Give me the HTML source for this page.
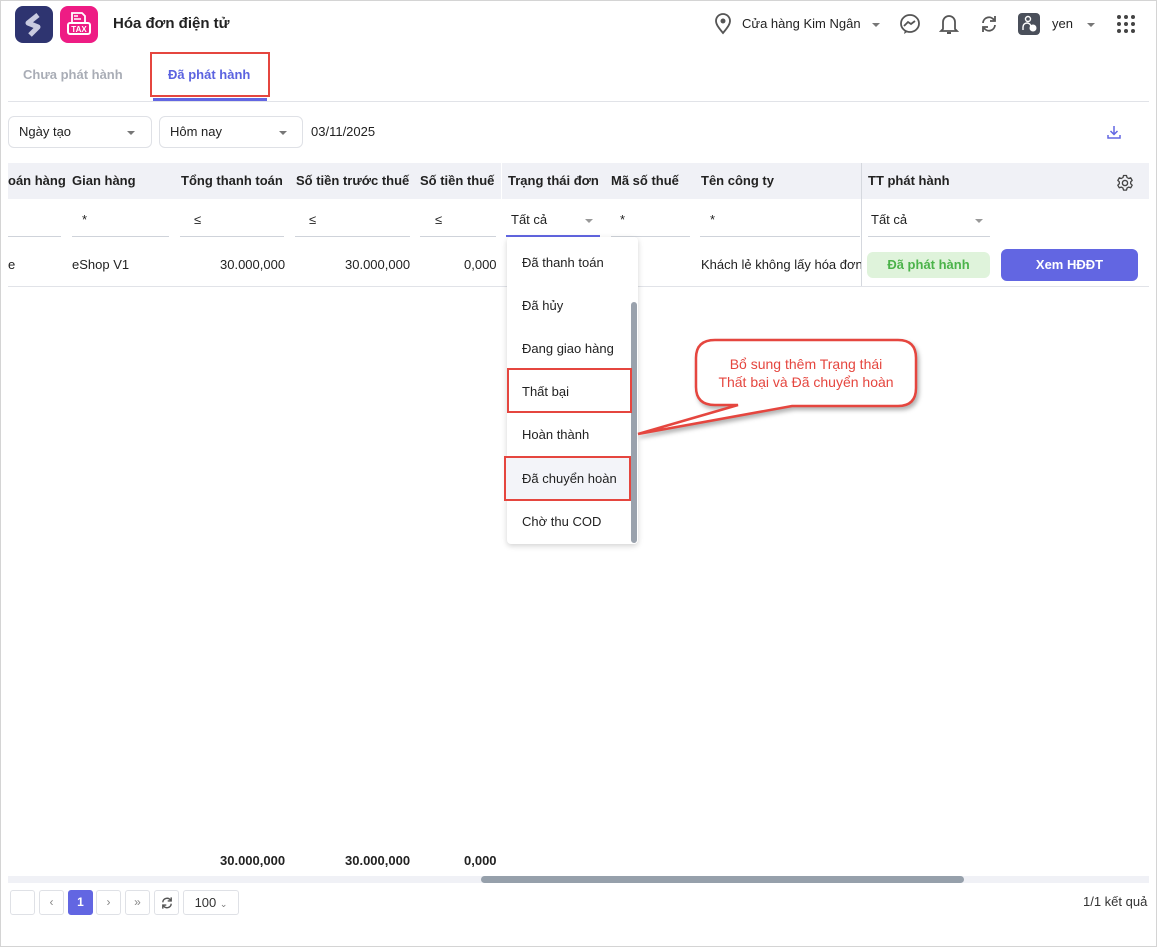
<!DOCTYPE html>
<html><head><meta charset="utf-8"><style>
*{box-sizing:border-box;margin:0;padding:0}
body{width:1157px;height:947px;overflow:hidden;background:#fff;font-family:"Liberation Sans","Noto Sans CJK SC",sans-serif;font-size:13px;color:#222;position:relative}
.a{position:absolute;white-space:nowrap}
.b{font-weight:bold}
.frame{left:0;top:0;width:1157px;height:947px;border:1px solid #d4d4d4}
.sel{border:1px solid #dfe1e6;border-radius:6px;height:32px;padding:7px 10px}
.tri{width:0;height:0;border-left:4px solid transparent;border-right:4px solid transparent;border-top:4px solid #777}
.ul{height:1px;background:#cfd3da}
.red{border:2px solid #e5463f}
.pg{border:1px solid #dfe1e6;border-radius:3px;height:25px;top:890px;text-align:center;line-height:23px;color:#888;font-size:12px}
.dd{font-size:13px;color:#222;left:522px}
</style></head><body>
<div class="a frame"></div>
<div class="a" style="left:15px;top:6px;width:38px;height:37px;border-radius:8px;background:#2e3470"></div>
<svg class="a" style="left:20px;top:11px" width="28" height="28" viewBox="0 0 28 28"><path d="M18 4 L8 12 L18 16 L10 24" stroke="#c9cbe0" stroke-width="5" fill="none" stroke-linejoin="round"/></svg>
<div class="a" style="left:60px;top:6px;width:38px;height:37px;border-radius:8px;background:#ee1c84"></div>
<svg class="a" style="left:60px;top:6px" width="38" height="37" viewBox="0 0 38 37"><path d="M12 16 V7 H22 L25 10 V16" fill="none" stroke="#fff" stroke-width="1.8"/><path d="M14 10 h4 M14 13 h7" stroke="#fff" stroke-width="1.4"/><rect x="8" y="17" width="22" height="11" rx="2" fill="none" stroke="#fff" stroke-width="2"/><text x="19" y="26" fill="#fff" font-size="8" font-weight="bold" text-anchor="middle" font-family="Liberation Sans">TAX</text></svg>
<div class="a b" style="left:113px;top:15px;font-size:15px;color:#222">Hóa đơn điện tử</div>
<svg class="a" style="left:714px;top:13px" width="18" height="22" viewBox="0 0 18 22"><path d="M9 20 C4 14 2 11 2 8 A7 7 0 0 1 16 8 C16 11 14 14 9 20Z" fill="none" stroke="#555" stroke-width="1.8"/><circle cx="9" cy="8" r="2.5" fill="#555"/></svg>
<div class="a" style="left:742px;top:16px;font-size:13px">Cửa hàng Kim Ngân</div>
<div class="a tri" style="left:872px;top:23px"></div>
<svg class="a" style="left:899px;top:13px" width="22" height="22" viewBox="0 0 22 22"><ellipse cx="11" cy="10.5" rx="9" ry="8.5" fill="none" stroke="#555" stroke-width="1.8"/><path d="M5 13 L9 9 L12 11 L16 8" fill="none" stroke="#555" stroke-width="1.8"/><path d="M6 17 L5 21 L9 18.5" fill="#555"/></svg>
<svg class="a" style="left:939px;top:12px" width="20" height="24" viewBox="0 0 20 24"><path d="M4 17 L4 10 A6 6 0 0 1 16 10 L16 17 L18 19 L2 19 Z" fill="none" stroke="#555" stroke-width="1.8"/><path d="M8 21 h4" stroke="#555" stroke-width="2"/></svg>
<svg class="a" style="left:979px;top:14px" width="20" height="20" viewBox="0 0 20 20"><path d="M4 9 A6 6 0 0 1 15 6" fill="none" stroke="#555" stroke-width="1.8"/><path d="M16 2 L16 7 L11 7" fill="none" stroke="#555" stroke-width="1.8"/><path d="M16 11 A6 6 0 0 1 5 14" fill="none" stroke="#555" stroke-width="1.8"/><path d="M4 18 L4 13 L9 13" fill="none" stroke="#555" stroke-width="1.8"/></svg>
<div class="a" style="left:1018px;top:13px;width:22px;height:22px;border-radius:4px;background:#4a4f5a"></div>
<svg class="a" style="left:1018px;top:13px" width="22" height="22" viewBox="0 0 22 22"><circle cx="10" cy="6" r="2.5" fill="none" stroke="#fff" stroke-width="1.4"/><path d="M5 17 v-3 a4 4 0 0 1 8 0" fill="none" stroke="#fff" stroke-width="1.4"/><circle cx="15" cy="15" r="3.5" fill="#fff"/></svg>
<div class="a" style="left:1052px;top:16px;font-size:13px">yen</div>
<div class="a tri" style="left:1087px;top:23px"></div>
<svg class="a" style="left:1117px;top:15px" width="18" height="18" viewBox="0 0 18 18" fill="#444"><circle cx="2" cy="2" r="2"/><circle cx="9" cy="2" r="2"/><circle cx="16" cy="2" r="2"/><circle cx="2" cy="9" r="2"/><circle cx="9" cy="9" r="2"/><circle cx="16" cy="9" r="2"/><circle cx="2" cy="16" r="2"/><circle cx="9" cy="16" r="2"/><circle cx="16" cy="16" r="2"/></svg>
<div class="a b" style="left:23px;top:67px;color:#a9adb6;font-size:13px">Chưa phát hành</div>
<div class="a b" style="left:168px;top:67px;color:#5b63e0;font-size:13px">Đã phát hành</div>
<div class="a red" style="left:150px;top:52px;width:120px;height:45px"></div>
<div class="a" style="left:153px;top:98px;width:114px;height:3px;background:#6266e2"></div>
<div class="a" style="left:8px;top:101px;width:1141px;height:1px;background:#e1e3e8"></div>
<div class="a sel" style="left:8px;top:116px;width:144px">Ngày tạo</div><div class="a tri" style="left:127px;top:131px"></div>
<div class="a sel" style="left:159px;top:116px;width:144px">Hôm nay</div><div class="a tri" style="left:279px;top:131px"></div>
<div class="a" style="left:311px;top:124px">03/11/2025</div>
<svg class="a" style="left:1106px;top:124px" width="16" height="16" viewBox="0 0 16 16"><path d="M8 2 v8 M4.5 7 L8 10.5 L11.5 7 M2 11 v3 h12 v-3" fill="none" stroke="#6266e2" stroke-width="1.5"/></svg>
<div class="a" style="left:8px;top:163px;width:1141px;height:36px;background:#f0f1f6"></div>
<div class="a" style="left:501px;top:163px;width:1px;height:36px;background:#fff"></div>
<div class="a" style="left:861px;top:163px;width:1px;height:124px;background:#d5d8de"></div>
<div class="a b" style="left:8px;top:173px">oán hàng</div>
<div class="a b" style="left:72px;top:173px">Gian hàng</div>
<div class="a b" style="left:181px;top:173px">Tổng thanh toán</div>
<div class="a b" style="left:296px;top:173px">Số tiền trước thuế</div>
<div class="a b" style="left:420px;top:173px">Số tiền thuế</div>
<div class="a b" style="left:508px;top:173px">Trạng thái đơn</div>
<div class="a b" style="left:611px;top:173px">Mã số thuế</div>
<div class="a b" style="left:701px;top:173px">Tên công ty</div>
<div class="a b" style="left:868px;top:173px">TT phát hành</div>
<svg class="a" style="left:1116px;top:174px" width="18" height="18" viewBox="0 0 18 18"><circle cx="9" cy="9" r="2.6" fill="none" stroke="#444" stroke-width="1.4"/><path d="M7.5 1.5 h3 l.5 2 1.7 1 2-.7 1.5 2.6-1.5 1.4 v2 l1.5 1.4-1.5 2.6-2-.7-1.7 1-.5 2 h-3 l-.5-2-1.7-1-2 .7-1.5-2.6 1.5-1.4 v-2 l-1.5-1.4 1.5-2.6 2 .7 1.7-1z" fill="none" stroke="#444" stroke-width="1.3" stroke-linejoin="round"/></svg>
<div class="a ul" style="left:8px;top:236px;width:53px"></div>
<div class="a" style="left:82px;top:212px">*</div><div class="a ul" style="left:72px;top:236px;width:97px"></div>
<div class="a" style="left:194px;top:212px">≤</div><div class="a ul" style="left:180px;top:236px;width:104px"></div>
<div class="a" style="left:309px;top:212px">≤</div><div class="a ul" style="left:295px;top:236px;width:115px"></div>
<div class="a" style="left:435px;top:212px">≤</div><div class="a ul" style="left:420px;top:236px;width:76px"></div>
<div class="a" style="left:511px;top:212px">Tất cả</div><div class="a tri" style="left:585px;top:219px;border-top-color:#999"></div>
<div class="a" style="left:506px;top:235px;width:94px;height:2px;background:#6266e2"></div>
<div class="a" style="left:620px;top:212px">*</div><div class="a ul" style="left:611px;top:236px;width:79px"></div>
<div class="a" style="left:710px;top:212px">*</div><div class="a ul" style="left:700px;top:236px;width:160px"></div>
<div class="a" style="left:871px;top:212px">Tất cả</div><div class="a tri" style="left:975px;top:219px;border-top-color:#999"></div><div class="a ul" style="left:868px;top:236px;width:122px"></div>
<div class="a" style="left:8px;top:257px">e</div>
<div class="a" style="left:72px;top:257px">eShop V1</div>
<div class="a" style="left:220px;top:257px">30.000,000</div>
<div class="a" style="left:345px;top:257px">30.000,000</div>
<div class="a" style="left:464px;top:257px">0,000</div>
<div class="a" style="left:701px;top:257px;width:160px;overflow:hidden">Khách lẻ không lấy hóa đơn</div>
<div class="a b" style="left:867px;top:252px;width:123px;height:26px;border-radius:6px;background:#dff3db;color:#4bb34a;text-align:center;line-height:26px">Đã phát hành</div>
<div class="a b" style="left:1001px;top:249px;width:137px;height:32px;border-radius:6px;background:#6266e2;color:#fff;text-align:center;line-height:32px">Xem HĐĐT</div>
<div class="a" style="left:8px;top:286px;width:1141px;height:1px;background:#e1e3e8"></div>
<div class="a" style="left:507px;top:237px;width:131px;height:307px;background:#fff;border-radius:4px;box-shadow:0 2px 6px rgba(0,0,0,.18)"></div>
<div class="a" style="left:631px;top:302px;width:6px;height:241px;background:#9aa2ad;border-radius:3px"></div>
<div class="a" style="left:506px;top:458px;width:124px;height:42px;background:#f3f4f9"></div>
<div class="a dd" style="top:255px">Đã thanh toán</div>
<div class="a dd" style="top:298px">Đã hủy</div>
<div class="a dd" style="top:341px">Đang giao hàng</div>
<div class="a dd" style="top:384px">Thất bại</div>
<div class="a dd" style="top:427px">Hoàn thành</div>
<div class="a dd" style="top:471px">Đã chuyển hoàn</div>
<div class="a dd" style="top:514px">Chờ thu COD</div>
<div class="a red" style="left:507px;top:368px;width:125px;height:45px"></div>
<div class="a red" style="left:504px;top:456px;width:127px;height:45px"></div>
<svg class="a" style="left:630px;top:335px" width="300" height="110" viewBox="0 0 300 110"><path d="M85 5 H268 Q286 5 286 23 V53 Q286 71 268 71 H162 L8 99 L108 70 H85 Q66 70 66 52 V23 Q66 5 85 5 Z" fill="#fff" stroke="#e5463f" stroke-width="2.5" style="filter:drop-shadow(2px 3px 2px rgba(0,0,0,.3))"/></svg>
<div class="a" style="left:696px;top:355px;width:220px;text-align:center;color:#e5463f;font-size:14px;line-height:18px;white-space:normal">Bổ sung thêm Trạng thái<br>Thất bại và Đã chuyển hoàn</div>
<div class="a b" style="left:220px;top:853px">30.000,000</div>
<div class="a b" style="left:345px;top:853px">30.000,000</div>
<div class="a b" style="left:464px;top:853px">0,000</div>
<div class="a" style="left:8px;top:876px;width:1141px;height:7px;background:#f0f1f6"></div>
<div class="a" style="left:481px;top:876px;width:483px;height:7px;background:#96a0ab;border-radius:4px"></div>
<div class="a pg" style="left:10px;width:25px"></div>
<div class="a pg" style="left:39px;width:25px">‹</div>
<div class="a pg b" style="left:68px;width:25px;background:#6266e2;border-color:#6266e2;color:#fff">1</div>
<div class="a pg" style="left:96px;width:25px">›</div>
<div class="a pg" style="left:125px;width:25px">»</div>
<div class="a pg" style="left:154px;width:25px"><svg width="14" height="14" viewBox="0 0 20 20" style="margin-top:5px"><path d="M4 9 A6 6 0 0 1 15 6 M16 2 L16 7 L11 7 M16 11 A6 6 0 0 1 5 14 M4 18 L4 13 L9 13" fill="none" stroke="#555" stroke-width="2"/></svg></div>
<div class="a pg" style="left:183px;width:56px;color:#333;font-size:13px">100 <span style="font-size:9px;color:#777">⌄</span></div>
<div class="a" style="left:1083px;top:894px;font-size:13px;color:#333">1/1 kết quả</div>
</body></html>
